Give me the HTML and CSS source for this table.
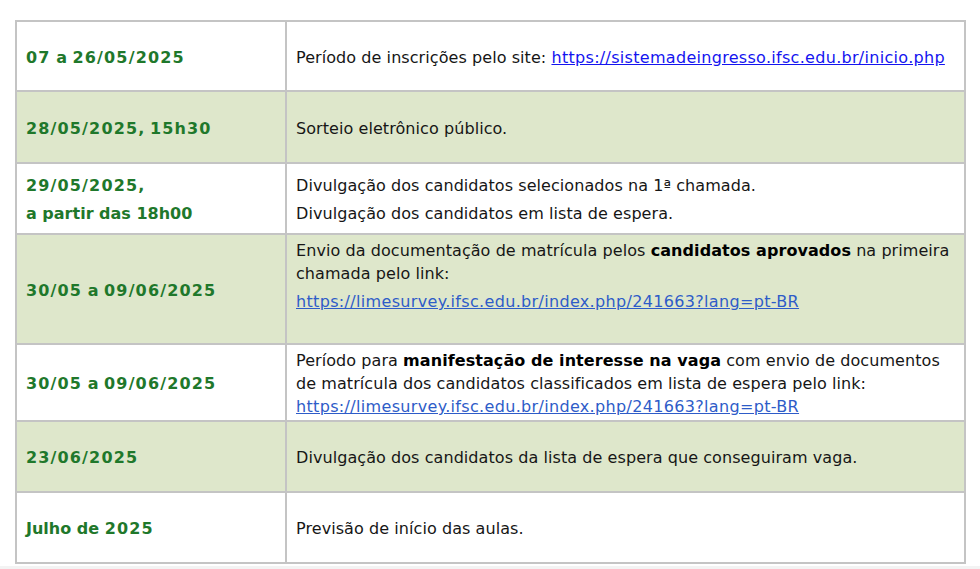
FILE: index.html
```html
<!DOCTYPE html>
<html lang="pt-BR">
<head>
<meta charset="utf-8">
<title>Cronograma</title>
<link rel="stylesheet" href="styles.css">
</head>
<body>
<div class="page">
  <table class="schedule">
    <tbody>
      <tr>
        <td class="date"><p><span class="n">07</span> a <span class="n">26/05/2025</span></p></td>
        <td class="info"><p>Período de inscrições pelo site: <a class="link-main" href="#">https://sistemadeingresso.ifsc.edu.br/inicio.php</a></p></td>
      </tr>
      <tr class="alt">
        <td class="date"><p><span class="n">28/05/2025</span>, <span class="n">15h30</span></p></td>
        <td class="info"><p>Sorteio eletrônico público.</p></td>
      </tr>
      <tr>
        <td class="date"><p><span class="n">29/05/2025</span>,</p><p>a partir das 18h00</p></td>
        <td class="info"><p>Divulgação dos candidatos selecionados na 1ª chamada.</p><p>Divulgação dos candidatos em lista de espera.</p></td>
      </tr>
      <tr class="alt">
        <td class="date"><p><span class="n">30/05</span> a <span class="n">09/06/2025</span></p></td>
        <td class="info"><p>Envio da documentação de matrícula pelos <strong>candidatos aprovados</strong> na primeira chamada pelo link:</p><p><a class="link" href="#">https://limesurvey.ifsc.edu.br/index.php/241663?lang=pt-BR</a></p><p>&nbsp;</p></td>
      </tr>
      <tr>
        <td class="date"><p><span class="n">30/05</span> a <span class="n">09/06/2025</span></p></td>
        <td class="info"><p>Período para <strong>manifestação de interesse na vaga</strong> com envio de documentos de matrícula dos candidatos classificados em lista de espera pelo link:<br><a class="link" href="#">https://limesurvey.ifsc.edu.br/index.php/241663?lang=pt-BR</a></p></td>
      </tr>
      <tr class="alt">
        <td class="date"><p><span class="n">23/06/2025</span></p></td>
        <td class="info"><p>Divulgação dos candidatos da lista de espera que conseguiram vaga.</p></td>
      </tr>
      <tr>
        <td class="date"><p>Julho de <span class="n">2025</span></p></td>
        <td class="info"><p>Previsão de início das aulas.</p></td>
      </tr>
    </tbody>
  </table>
  <div class="footer-band"></div>
</div>
</body>
</html>
```
FILE: styles.css
```css
* { box-sizing: border-box; }
html, body { margin: 0; padding: 0; background: #fff; }
body {
  font-family: "DejaVu Sans", Verdana, sans-serif;
  font-size: 16px;
  color: #161616;
  overflow: hidden;
}
.page { padding-top: 20px; }
.schedule {
  margin-left: 15px;
  width: 951px;
  table-layout: fixed;
  border-collapse: separate;
  border-spacing: 0;
  border-top: 2px solid #c4c4c4;
  border-left: 2px solid #c4c4c4;
}
.schedule td {
  height: 71px;
  padding: 4px 9px 2px;
  vertical-align: middle;
  border-right: 2px solid #c4c4c4;
  border-bottom: 2px solid #c4c4c4;
}
.schedule tr:first-child td { height: 70px; }
.schedule tr.alt:nth-child(2) td { height: 72px; }
.schedule td.date {
  width: 270px;
  font-weight: bold;
  color: #1f782b;
}
.schedule td.info { letter-spacing: 0.07px; }
.schedule .n { letter-spacing: 1.15px; }
.schedule tr.alt td { background: #dee7cb; }
.schedule p {
  margin: 0;
  line-height: 23px;
}
.schedule p + p { margin-top: 5px; }
.schedule strong { font-weight: bold; color: #000; }
.link-main { color: #1414f0; text-decoration: underline; letter-spacing: 0.3px; }
.link { color: #2e5cc8; text-decoration: underline; letter-spacing: 0.33px; }
.footer-band {
  margin-top: 2px;
  height: 12px;
  background: #f3f3f3;
}
```
